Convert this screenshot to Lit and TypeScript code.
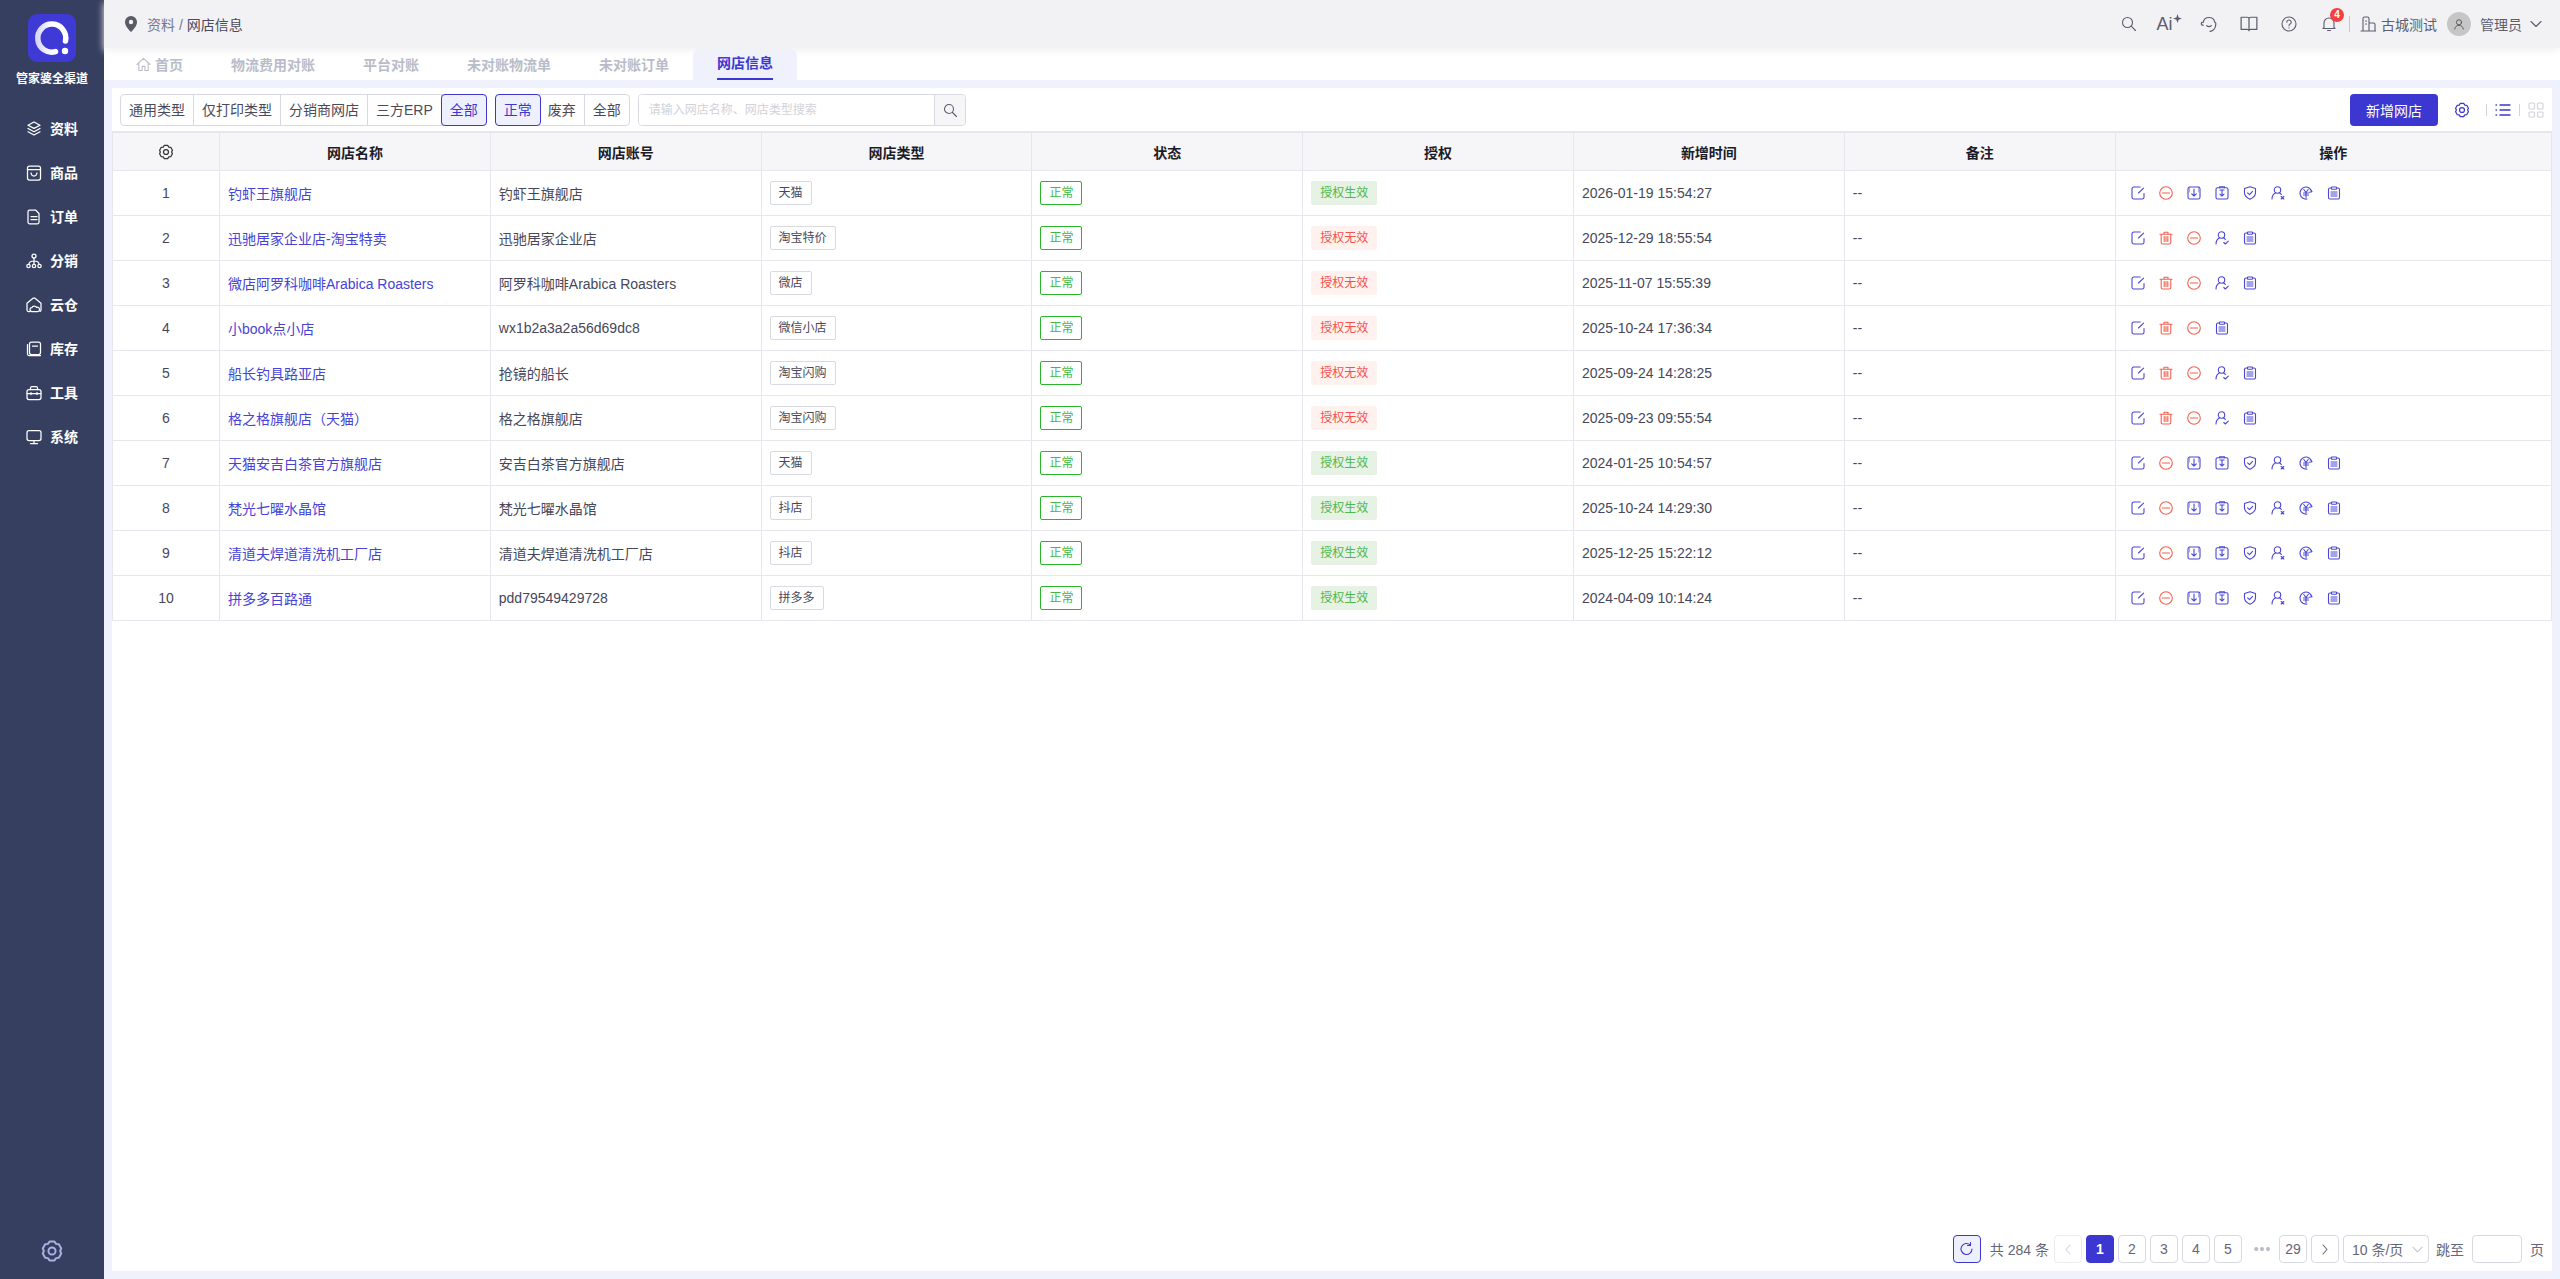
import { css, html, svg, LitElement, SVGTemplateResult } from 'lit';
import { customElement } from 'lit/decorators.js';

const ic = (body: SVGTemplateResult, size = 14, box = 14) => html`<svg class="ic" width=${size} height=${size} viewBox="0 0 ${box} ${box}" fill="none" stroke="currentColor" stroke-width="1.1" stroke-linecap="round" stroke-linejoin="round">${body}</svg>`;

const gearPath = svg`<path d="M6.500 2.200h3l1 1.400 1.700.2 1.500 2.600-.7 1.600.7 1.600-1.500 2.600-1.700.2-1 1.400h-3l-1-1.400-1.700-.2-1.500-2.600.7-1.600-.7-1.600 1.500-2.600 1.700-.2z"/><circle cx="8" cy="8" r="2.200"/>`;

const actions: Record<string, unknown> = {
    edit: ic(svg`<path d="M13 7.500v3.700a1.800 1.800 0 0 1-1.800 1.800H2.800A1.800 1.800 0 0 1 1 11.200V2.800A1.800 1.800 0 0 1 2.800 1h6.400"/><path d="M7.500 7 12.600 2.200"/>`),
    stop: ic(svg`<circle cx="7" cy="7" r="6.300"/><path d="M3.400 7h7.200"/>`),
    trash: ic(svg`<path d="M1 3.200h12M5 3V1.200h4V3M2.200 3.200v8.300A1.500 1.500 0 0 0 3.700 13h6.600a1.500 1.500 0 0 0 1.500-1.500V3.200M5.200 5.500v5M7 5.500v5M8.800 5.500v5"/>`),
    down: ic(svg`<rect x="1" y="1" width="12" height="12" rx="1.800"/><path d="M7 3v7M4.700 7.800 7 10l2.300-2.200"/><path d="M2.500 1v5M11.500 1v5" opacity=".45"/>`),
    tray: ic(svg`<rect x="1" y="1.800" width="12" height="11.200" rx="1.500"/><path d="M4.500 1.800V.8h5v1M7 4v6M5 8.200 7 10l2-1.800M5 4h4"/>`),
    shield: ic(svg`<path d="M7 .8l5.500 1.800v4.200c0 3-2.300 5-5.500 6.400-3.200-1.400-5.500-3.400-5.500-6.400V2.600z"/><path d="M4.600 6.800 6.500 8.700 9.600 5.400"/>`),
    userX: ic(svg`<circle cx="6.500" cy="4" r="3.200"/><path d="M1 13c0-3 1.500-5 3.700-6.200M8.300 6.800c.8.400 1.500 1 2 1.700"/><path d="M10.200 10.500l2.600 2.500M12.800 10.500l-2.600 2.500"/>`),
    userOk: ic(svg`<circle cx="6.500" cy="4" r="3.200"/><path d="M1 13c0-3 1.500-5 3.700-6.200M8.300 6.800c.8.400 1.500 1 2 1.700"/><path d="M8.800 11.500l1.500 1.500 3-2.800"/>`),
    yen: ic(svg`<path d="M12.800 5.500A6 6 0 1 0 8 13M11.300 3.400 13 5.600l-2.600.6"/><path d="M4.800 3.500 7 6.500l2.200-3M4.500 7h5M4.500 9h5M7 6.500V11.500"/>`),
    clip: ic(svg`<path d="M4.500 2H3a1.500 1.500 0 0 0-1.500 1.500v8A1.500 1.500 0 0 0 3 13h8a1.500 1.500 0 0 0 1.500-1.500v-8A1.500 1.500 0 0 0 11 2H9.500"/><rect x="4.500" y="1" width="5" height="2.200" rx=".5"/><path d="M4 6h6M4 8h6M4 10h6"/>`),
};

const FULL = ['edit', 'stop', 'down', 'tray', 'shield', 'userX', 'yen', 'clip'];
const BAD = ['edit', 'trash', 'stop', 'userOk', 'clip'];

const SHOPS = [
    { name: '钓虾王旗舰店', account: '钓虾王旗舰店', type: '天猫', ok: true, time: '2026-01-19 15:54:27', ops: FULL },
    { name: '迅驰居家企业店-淘宝特卖', account: '迅驰居家企业店', type: '淘宝特价', ok: false, time: '2025-12-29 18:55:54', ops: BAD },
    { name: '微店阿罗科咖啡Arabica Roasters', account: '阿罗科咖啡Arabica Roasters', type: '微店', ok: false, time: '2025-11-07 15:55:39', ops: BAD },
    { name: '小book点小店', account: 'wx1b2a3a2a56d69dc8', type: '微信小店', ok: false, time: '2025-10-24 17:36:34', ops: ['edit', 'trash', 'stop', 'clip'] },
    { name: '船长钓具路亚店', account: '抢镜的船长', type: '淘宝闪购', ok: false, time: '2025-09-24 14:28:25', ops: BAD },
    { name: '格之格旗舰店（天猫）', account: '格之格旗舰店', type: '淘宝闪购', ok: false, time: '2025-09-23 09:55:54', ops: BAD },
    { name: '天猫安吉白茶官方旗舰店', account: '安吉白茶官方旗舰店', type: '天猫', ok: true, time: '2024-01-25 10:54:57', ops: FULL },
    { name: '梵光七曜水晶馆', account: '梵光七曜水晶馆', type: '抖店', ok: true, time: '2025-10-24 14:29:30', ops: FULL },
    { name: '清道夫焊道清洗机工厂店', account: '清道夫焊道清洗机工厂店', type: '抖店', ok: true, time: '2025-12-25 15:22:12', ops: FULL },
    { name: '拼多多百路通', account: 'pdd79549429728', type: '拼多多', ok: true, time: '2024-04-09 10:14:24', ops: FULL },
];

const NAV = [
    { label: '资料', icon: svg`<path d="M8 1 14 4.200 8 7.400 2 4.200zM2 7.500l6 3.200 6-3.200M2 10.800 8 14l6-3.200"/>` },
    { label: '商品', icon: svg`<rect x="1.500" y="1" width="13" height="14" rx="2"/><path d="M1.500 4.500h13M5 8c.4 2 1.500 3 3 3s2.600-1 3-3"/>` },
    { label: '订单', icon: svg`<path d="M3.500 1.200h6.300l3.200 3.300v8.800a1.500 1.500 0 0 1-1.500 1.500H3.500A1.500 1.500 0 0 1 2 13.300V2.700a1.500 1.500 0 0 1 1.500-1.500zM5 7.500h6M5 10.500h6"/>` },
    { label: '分销', icon: svg`<circle cx="8" cy="3" r="2"/><circle cx="2.500" cy="13" r="1.700"/><circle cx="8" cy="13" r="1.700"/><circle cx="13.500" cy="13" r="1.700"/><path d="M8 5v6M3 11c0-2 1.500-2.800 5-3 3.500.2 5 1 5 3"/>` },
    { label: '云仓', icon: svg`<path d="M4 14.500H2.500A1.500 1.500 0 0 1 1 13V6.200L7 1.200h2l6 5V13a1.500 1.500 0 0 1-1 1.400"/><path d="M6 14.500a2 2 0 0 1 0-4c.4-1.500 3.600-2 4.500 0a2 2 0 0 1 3 1.800 2 2 0 0 1-1.500 2.200z"/>` },
    { label: '库存', icon: svg`<rect x="3.500" y="1" width="11" height="12.500" rx="2"/><path d="M1.500 3.500v9.500a1.500 1.500 0 0 0 1.500 1.500h11.500M6.500 5h5"/>` },
    { label: '工具', icon: svg`<rect x="1" y="4.500" width="14" height="10" rx="2"/><path d="M4.500 4.500V3A1.500 1.500 0 0 1 6 1.500h4A1.500 1.500 0 0 1 11.500 3v1.500M1 8.500h14M5 7.500v2M11 7.500v2"/>` },
    { label: '系统', icon: svg`<rect x="1" y="1.500" width="14" height="10" rx="2"/><path d="M8 11.500v3M4.500 14.500h7"/>` },
];

const TABS = ['物流费用对账', '平台对账', '未对账物流单', '未对账订单'];

@customElement('app-root')
export class AppRoot extends LitElement {

    static get styles() {
        return css`
      :host {
        display: flex;
        height: 100vh;
        min-height: 1279px;
        background: #eff1fd;
        color: #4a4a5c;
        font: 14px "Liberation Sans", "Noto Sans CJK SC", sans-serif;
      }
      .ic { display: block; flex: none; }

      .side {
        width: 104px;
        flex: none;
        display: flex;
        flex-direction: column;
        align-items: center;
        background: #373f60;
        color: #fff;
        padding-top: 14px;
        box-sizing: border-box;
      }
      .brand { margin-top: 9px; margin-bottom: 20px; font-size: 12px; font-weight: 700; line-height: 16px; }
      .nav { height: 44px; display: flex; align-items: center; gap: 8px; font-weight: 700; line-height: 20px; }
      .nav .ic { stroke-width: 1.25; }
      .side-gear { margin-top: auto; margin-bottom: 15px; color: #a9b2e2; }
      .side-gear .ic { stroke-width: 1.2; }

      .main { flex: 1; min-width: 0; display: flex; flex-direction: column; }
      .top {
        height: 48px;
        flex: none;
        display: flex;
        align-items: center;
        padding: 0 18px 0 20px;
        background: #f2f2f5;
        box-shadow: 0 3px 7px #f2f2f5;
        position: relative;
        z-index: 1;
        color: #5d5d70;
      }
      .crumb { margin-left: 9px; color: #77778a; }
      .crumb b { font-weight: 400; color: #4a4a5c; }
      .tools { margin-left: auto; display: flex; align-items: center; }
      .tool { width: 40px; display: flex; justify-content: center; }
      .ai { display: flex; font-size: 18px; line-height: 20px; }
      .bell { position: relative; }
      .badge {
        position: absolute;
        top: -8px;
        left: 21px;
        width: 14px;
        height: 14px;
        border-radius: 50%;
        background: #f5403f;
        color: #fff;
        font-size: 10px;
        font-weight: 700;
        line-height: 14px;
        text-align: center;
      }
      .vline { width: 1px; height: 16px; background: #bcc5ea; }
      .org { margin-left: 10px; display: flex; align-items: center; gap: 5px; }
      .avatar {
        margin-left: 10px;
        width: 24px;
        height: 24px;
        border-radius: 50%;
        background: #c6c6c6;
        display: flex;
        align-items: center;
        justify-content: center;
        color: #555;
      }
      .who { margin-left: 9px; }
      .chev { margin-left: 8px; }

      .tabs { height: 32px; flex: none; display: flex; background: #fff; padding-left: 8px; }
      .tab {
        padding: 0 24px;
        display: flex;
        align-items: center;
        gap: 4px;
        font-weight: 700;
        color: #b9bcc8;
      }
      .tab.on { background: #eff1fd; border-radius: 8px 8px 0 0; color: #3b37d0; }
      .tab.on span { height: 30px; line-height: 30px; border-bottom: 2px solid #3b37d0; }

      .body {
        flex: 1;
        margin: 8px;
        background: #fff;
        display: flex;
        flex-direction: column;
      }
      .bar { height: 43px; flex: none; display: flex; align-items: flex-start; padding: 6px 8px 0; box-sizing: border-box; gap: 8px; }
      .seg { display: flex; height: 32px; box-sizing: border-box; border: 1px solid #d9d9e2; border-radius: 4px; }
      .seg span { padding: 0 8px; line-height: 30px; border-right: 1px solid #d9d9e2; }
      .seg span:last-child { border-right: 0; }
      .seg span.on {
        margin: -1px;
        padding: 0 8px;
        line-height: 30px;
        border: 1px solid #3b37d0;
        border-radius: 4px;
        background: #eff0fd;
        color: #3b37d0;
      }
      .search { display: flex; width: 328px; height: 32px; box-sizing: border-box; border: 1px solid #d9d9e2; border-radius: 4px; overflow: hidden; }
      .search input { flex: 1; min-width: 0; border: 0; outline: 0; padding: 0 10px; font: inherit; font-size: 12px; }
      .search input::placeholder { color: #d2d2da; }
      .search button {
        width: 31px;
        padding: 0;
        border: 0;
        border-left: 1px solid #d9d9e2;
        background: #f6f6f9;
        display: flex;
        align-items: center;
        justify-content: center;
        color: #5d5d70;
      }
      .add {
        margin-left: auto;
        width: 88px;
        height: 32px;
        padding: 0;
        border: 0;
        border-radius: 4px;
        background: #3b37d0;
        color: #fff;
        font: inherit;
      }
      .views { height: 32px; display: flex; align-items: center; margin-left: 7px; color: #3b37d0; }
      .views i { width: 1px; height: 12px; margin: 0 8px; background: #d0d2dc; }
      .views .gear { margin-right: 7px; }
      .views .grid { color: #d0d2dc; }

      table { width: 100%; border-collapse: separate; border-spacing: 0; table-layout: fixed; }
      th, td {
        box-sizing: border-box;
        border-right: 1px solid #e6e6ec;
        border-bottom: 1px solid #e6e6ec;
        padding: 0 8px;
        text-align: left;
        white-space: nowrap;
      }
      th:first-child, td:first-child { border-left: 1px solid #e6e6ec; text-align: center; }
      th {
        height: 40px;
        border-top: 2px solid #e6e6ec;
        background: #f6f6f9;
        color: #1c1c28;
        text-align: center;
      }
      th .ic { margin: 0 auto; color: #333; }
      td { height: 45px; color: #47475a; }
      .link { color: #4643d6; }
      .tag {
        display: block;
        width: fit-content;
        height: 24px;
        box-sizing: border-box;
        border: 1px solid #d9d9e2;
        border-radius: 2px;
        padding: 0 8px;
        font-size: 12px;
        line-height: 22px;
      }
      .tag.good { border-color: #2ab52a; color: #46b846; }
      .tag.yes { border-color: #e6f2e4; background: #e6f2e4; color: #4fb84f; }
      .tag.no { border-color: #fff1ee; background: #fff1ee; color: #f5514f; }
      .ops { display: flex; gap: 14px; padding-left: 7px; color: #4a47d6; }
      .ops .red { color: #f5604f; }

      .pager { margin-top: auto; display: flex; align-items: center; justify-content: flex-end; padding: 0 8px 8px 0; color: #66667a; }
      .pg {
        box-sizing: border-box;
        width: 28px;
        height: 28px;
        margin-right: 4px;
        border: 1px solid #d9d9e2;
        border-radius: 4px;
        display: flex;
        align-items: center;
        justify-content: center;
      }
      .pg.now { background: #3b37d0; border-color: #3b37d0; color: #fff; font-weight: 700; }
      .pg.off { color: #d2d2da; border-color: #ebebf0; }
      .pg.fresh { background: #eff0fd; border-color: #3b37d0; color: #3b37d0; margin-right: 9px; }
      .total { margin-right: 5px; }
      .more { width: 33px; text-align: center; letter-spacing: 1px; color: #b9bcc8; }
      .size {
        box-sizing: border-box;
        width: 86px;
        height: 28px;
        margin-right: 7px;
        border: 1px solid #d9d9e2;
        border-radius: 4px;
        display: flex;
        align-items: center;
        justify-content: space-between;
        padding: 0 5px 0 8px;
      }
      .size .ic { color: #c4c4ce; }
      .jump { box-sizing: border-box; width: 50px; height: 28px; margin: 0 8px; border: 1px solid #d9d9e2; border-radius: 4px; }
      `;
    }

    renderSide() {
        return html`
      <aside class="side">
        <svg width="48" height="48" viewBox="0 0 48 48" class="ic">
          <defs><linearGradient id="q" x1="0" y1="0" x2="1" y2="0"><stop offset="0" stop-color="#d8d7f8"/><stop offset=".5" stop-color="#fff"/></linearGradient></defs>
          <rect width="48" height="48" rx="9" fill="#3f39d6"/>
          <path d="M37.500 27A14 14 0 1 0 27.500 37.600" fill="none" stroke="url(#q)" stroke-width="5.500" stroke-linecap="round"/>
          <circle cx="37" cy="37" r="3.200" fill="#fff"/>
        </svg>
        <div class="brand">管家婆全渠道</div>
        ${NAV.map(n => html`<div class="nav">${ic(n.icon, 16, 16)}<span>${n.label}</span></div>`)}
        <div class="side-gear">${ic(gearPath, 26, 16)}</div>
      </aside>`;
    }

    renderTop() {
        return html`
      <header class="top">
        <svg class="ic" width="14" height="16" viewBox="0 0 14 16"><path fill="#5a5a68" fill-rule="evenodd" d="M7 0a6 6 0 0 1 6 6c0 4-4 8-6 10C5 14 1 10 1 6a6 6 0 0 1 6-6zm0 3.800a2.200 2.200 0 1 0 0 4.400 2.200 2.200 0 0 0 0-4.400z"/></svg>
        <span class="crumb">资料 / <b>网店信息</b></span>
        <div class="tools">
          <div class="tool">${ic(svg`<circle cx="6.500" cy="6.500" r="5"/><path d="M10.200 10.200 14.500 14.500"/>`, 16, 16)}</div>
          <div class="tool"><span class="ai">Ai<svg class="ic" width="9" height="9" viewBox="0 0 8 8"><path fill="currentColor" d="M4 0l1 3 3 1-3 1-1 3-1-3-3-1 3-1z"/></svg></span></div>
          <div class="tool">${ic(svg`<path d="M2.800 6.500A5.300 5.300 0 0 1 13.200 6.500M1.800 6.500c-.8.600-.8 2 0 2.500h1M14 7v1.500c0 3-2.200 5.500-5 6"/><path d="M6 9.500c1.200 1 2.800 1 4 0"/>`, 18, 16)}</div>
          <div class="tool">${ic(svg`<path d="M1 2h5.500c.8 0 1.500.6 1.500 1.500V14c0-.8-.7-1.200-1.500-1.200H1zM15 2H9.500C8.700 2 8 2.600 8 3.500V14c0-.8.7-1.200 1.500-1.200H15z"/>`, 18, 16)}</div>
          <div class="tool">${ic(svg`<circle cx="8" cy="8" r="7"/><path d="M5.800 6.200a2.200 2.200 0 1 1 3.300 1.900c-.7.400-1.100.9-1.100 1.700M8 11.800v.2"/>`, 16, 16)}</div>
          <div class="tool bell">${ic(svg`<path d="M3 11.500V7a5 5 0 0 1 10 0v4.500l1 1H2zM6.500 14.500h3"/>`, 16, 16)}<span class="badge">4</span></div>
          <span class="vline"></span>
          <div class="org">${ic(svg`<path d="M1 15h15M3 15V2.500A1.500 1.500 0 0 1 4.500 1h3A1.500 1.500 0 0 1 9 2.500V15M9 7h4.500A1.500 1.500 0 0 1 15 8.500V15M5.500 5h1M5.500 8h1"/>`, 16, 16)}<span>古城测试</span></div>
          <div class="avatar">${ic(svg`<circle cx="7" cy="5" r="3"/><path d="M2 13c.5-3 2.500-4.500 5-4.500s4.500 1.500 5 4.500"/>`, 12, 14)}</div>
          <span class="who">管理员</span>
          <span class="chev">${ic(svg`<path d="M1 3.500 6 8.500 11 3.500"/>`, 12, 12)}</span>
        </div>
      </header>
      <nav class="tabs">
        <div class="tab">${ic(svg`<path d="M1 8 8 1.500 15 8M3 6.500V14.500H6.500V10h3v4.500H13V6.500"/>`, 15, 16)}首页</div>
        ${TABS.map(t => html`<div class="tab">${t}</div>`)}
        <div class="tab on"><span>网店信息</span></div>
      </nav>`;
    }

    renderBar() {
        return html`
      <div class="bar">
        <div class="seg"><span>通用类型</span><span>仅打印类型</span><span>分销商网店</span><span>三方ERP</span><span class="on">全部</span></div>
        <div class="seg"><span class="on">正常</span><span>废弃</span><span>全部</span></div>
        <div class="search">
          <input placeholder="请输入网店名称、网店类型搜索" />
          <button>${ic(svg`<circle cx="6" cy="6" r="4.500"/><path d="M9.500 9.500 13.500 13.500"/>`, 14, 14)}</button>
        </div>
        <button class="add">新增网店</button>
        <div class="views">
          <span class="gear">${ic(gearPath, 18, 16)}</span>
          <i></i>
          ${ic(svg`<path d="M5 3h10M5 8h10M5 13h10M1 3h.5M1 8h.5M1 13h.5" stroke-width="1.300"/>`, 16, 16)}
          <i></i>
          <span class="grid">${ic(svg`<rect x="1" y="1" width="5.500" height="6" rx="1"/><rect x="9.500" y="1" width="5.500" height="6" rx="1"/><rect x="1" y="10" width="5.500" height="5" rx="1"/><rect x="9.500" y="10" width="5.500" height="5" rx="1"/>`, 16, 16)}</span>
        </div>
      </div>`;
    }

    renderTable() {
        return html`
      <table>
        <colgroup>
          <col style="width:108px" />
          ${[1, 2, 3, 4, 5, 6, 7].map(() => html`<col style="width:270.8px" />`)}
          <col />
        </colgroup>
        <thead>
          <tr>
            <th>${ic(gearPath, 18, 16)}</th>
            ${['网店名称', '网店账号', '网店类型', '状态', '授权', '新增时间', '备注', '操作'].map(h => html`<th>${h}</th>`)}
          </tr>
        </thead>
        <tbody>
          ${SHOPS.map((s, i) => html`
            <tr>
              <td>${i + 1}</td>
              <td class="link">${s.name}</td>
              <td>${s.account}</td>
              <td><span class="tag">${s.type}</span></td>
              <td><span class="tag good">正常</span></td>
              <td><span class="tag ${s.ok ? 'yes' : 'no'}">${s.ok ? '授权生效' : '授权无效'}</span></td>
              <td>${s.time}</td>
              <td>--</td>
              <td><div class="ops">${s.ops.map(o => html`<span class=${o === 'stop' || o === 'trash' ? 'red' : ''}>${actions[o]}</span>`)}</div></td>
            </tr>`)}
        </tbody>
      </table>`;
    }

    renderPager() {
        return html`
      <div class="pager">
        <div class="pg fresh">${ic(svg`<path d="M13 8a5.500 5.500 0 1 1-1.600-3.900M11.500 1.500v3h-3"/>`, 16, 16)}</div>
        <span class="total">共 284 条</span>
        <div class="pg off">${ic(svg`<path d="M8 2 4 6.500 8 11"/>`, 12, 12)}</div>
        <div class="pg now">1</div>
        ${['2', '3', '4', '5'].map(p => html`<div class="pg">${p}</div>`)}
        <span class="more">•••</span>
        <div class="pg">29</div>
        <div class="pg">${ic(svg`<path d="M4 2 8 6.500 4 11"/>`, 12, 12)}</div>
        <div class="size"><span>10 条/页</span>${ic(svg`<path d="M1 3.500 6 8.500 11 3.500"/>`, 11, 12)}</div>
        <span>跳至</span>
        <input class="jump" />
        <span>页</span>
      </div>`;
    }

    render() {
        return html`
      ${this.renderSide()}
      <div class="main">
        ${this.renderTop()}
        <section class="body">
          ${this.renderBar()}
          ${this.renderTable()}
          ${this.renderPager()}
        </section>
      </div>
    `;
    }
}
